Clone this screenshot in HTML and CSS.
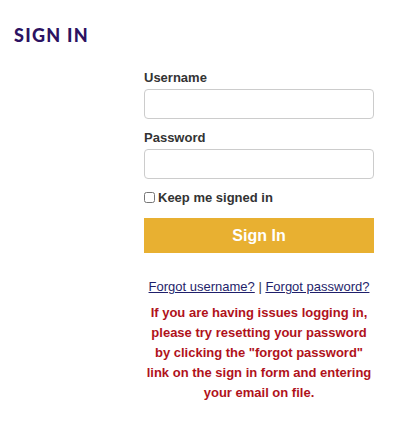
FILE: index.html
```html
<!DOCTYPE html>
<html>
<head>
<meta charset="utf-8">
<link rel="stylesheet" href="styles.css">
</head>
<body>
<h1 class="title">SIGN IN</h1>
<form class="signin">
  <label class="lbl" for="u">Username</label>
  <input class="field" id="u" type="text">
  <label class="lbl" for="p">Password</label>
  <input class="field" id="p" type="password">
  <label class="keep"><input type="checkbox" class="chk"><span>Keep me signed in</span></label>
  <button type="button" class="btn">Sign In</button>
  <p class="links"><a href="#">Forgot username?</a> | <a href="#">Forgot password?</a></p>
  <p class="note">If you are having issues logging in, please try resetting your password by clicking the "forgot password" link on the sign in form and entering your email on file.</p>
</form>
</body>
</html>
```
FILE: styles.css
```css
html, body { margin: 0; padding: 0; background: #fff; }
body { font-family: "Liberation Sans", Arial, sans-serif; color: #333; }
.title {
  margin: 0;
  padding: 25px 0 0 14px;
  font-family: Lato, "Noto Sans", sans-serif;
  font-weight: 900;
  font-size: 18px;
  letter-spacing: 1.3px;
  line-height: 20px;
  color: #2c1262;
}
.signin {
  width: 230px;
  margin: 25px 0 0 144px;
  display: flex;
  flex-direction: column;
}
.lbl {
  font-weight: bold;
  font-size: 13px;
  line-height: 15px;
  margin-bottom: 4px;
}
.field {
  box-sizing: border-box;
  width: 230px;
  height: 30px;
  border: 1px solid #ccc;
  border-radius: 4px;
  margin: 0 0 11px 0;
  padding: 0 8px;
}
.keep {
  display: flex;
  align-items: center;
  font-weight: bold;
  font-size: 13px;
  line-height: 15px;
}
.chk { margin: 0 3px 0 0; width: 11px; height: 11px; }
.btn {
  margin-top: 13px;
  height: 35px;
  border: 0;
  background: #e8b031;
  color: #fff;
  font-family: "Liberation Sans", Arial, sans-serif;
  font-weight: bold;
  font-size: 16px;
  padding: 0;
}
.links {
  margin: 26px 0 0 0;
  text-align: center;
  font-size: 13px;
  line-height: 15px;
  color: #333;
}
.links a { color: #1f1f6b; }
.note {
  margin: 9px 0 0 0;
  text-align: center;
  font-weight: bold;
  font-size: 13px;
  line-height: 20px;
  color: #b0121b;
}
```
